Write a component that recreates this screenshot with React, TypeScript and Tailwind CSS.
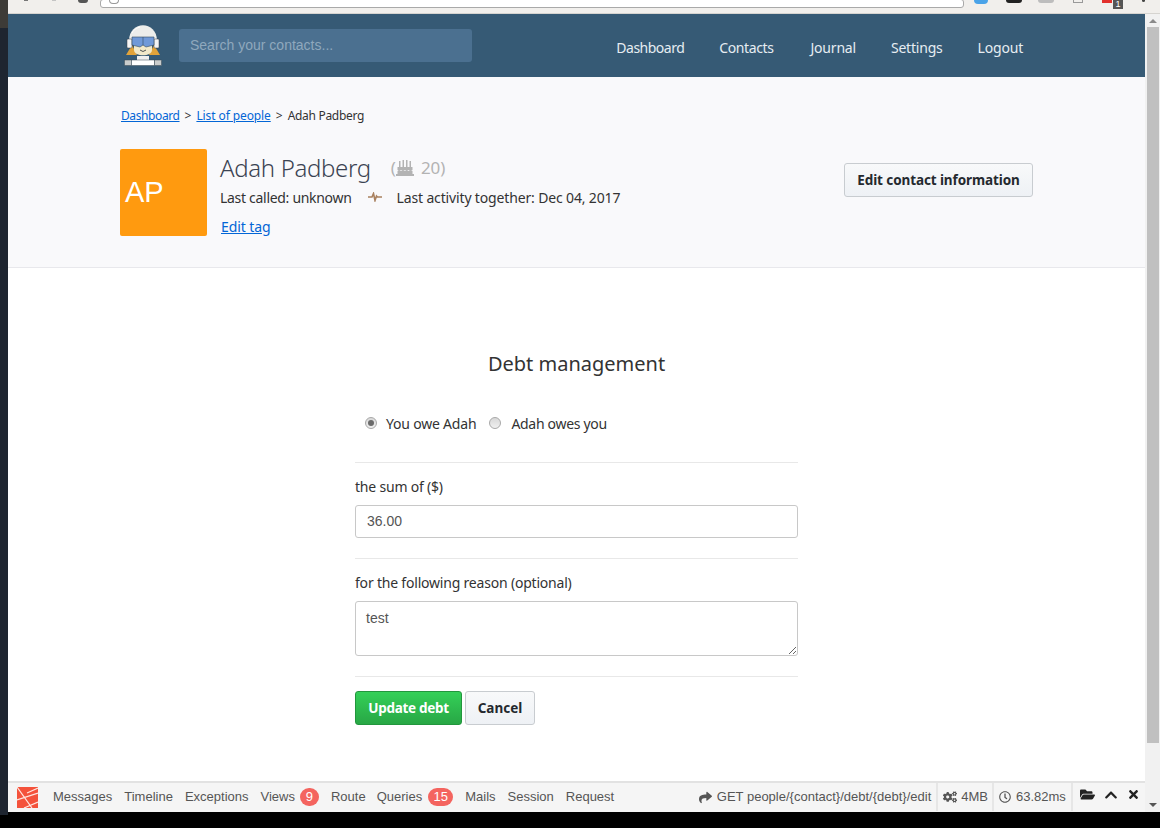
import { FaCogs, FaChevronUp, FaFolderOpen, FaRegClock, FaShare, FaTimes } from 'react-icons/fa';

const navLinks = [
  { label: 'Dashboard', className: 'tracking-[-0.5px]' },
  { label: 'Contacts', className: 'tracking-[-0.4px] mr-[2px]' },
  { label: 'Journal', className: '' },
  { label: 'Settings', className: '' },
  { label: 'Logout', className: '' },
];

function Logo() {
  return (
    <svg width="38" height="41" viewBox="0 0 38 41" className="shrink-0">
      <path d="M2 30 L8 20 L13 30 Z" fill="#e2a33a" />
      <path d="M36 30 L30 20 L25 30 Z" fill="#e2a33a" />
      <path d="M5 16 C5 -5 33 -5 33 16 L33 20 H5 Z" fill="#ecedeb" />
      <path d="M8 8 C10 4 13 3 16 2" fill="none" stroke="#ffffff" strokeWidth="1" />
      <path d="M10 20 H28 V25 C28 32 10 32 10 25 Z" fill="#f2e9c9" />
      <rect x="3" y="14" width="5" height="9" rx="1" fill="#f4f4f4" stroke="#3a3f44" strokeWidth="0.5" />
      <rect x="30" y="14" width="5" height="9" rx="1" fill="#f4f4f4" stroke="#3a3f44" strokeWidth="0.5" />
      <path d="M8 12 H30 V20 L22 22 L19 20 L16 22 L8 20 Z" fill="#7099d8" stroke="#34495e" strokeWidth="0.6" />
      <path d="M19 12 V20" stroke="#34495e" strokeWidth="0.6" />
      <path d="M16 25 Q19 28 22 25" fill="none" stroke="#3a3f44" strokeWidth="0.9" />
      <rect x="13" y="31" width="12" height="4" fill="#f0f0ee" />
      <rect x="0.5" y="35" width="7" height="5.5" fill="#c9cccc" stroke="#3a4a55" strokeWidth="0.5" />
      <rect x="7.5" y="35" width="23" height="5.5" fill="#ffffff" stroke="#3a4a55" strokeWidth="0.5" />
      <rect x="30.5" y="35" width="7" height="5.5" fill="#c9cccc" stroke="#3a4a55" strokeWidth="0.5" />
    </svg>
  );
}

function Cake() {
  return (
    <svg width="18" height="16" viewBox="0 0 18 16">
      <g fill="#b3b3b3">
        <rect x="3" y="1" width="1.5" height="6" />
        <rect x="6.5" y="0" width="1.5" height="7" />
        <rect x="10" y="0" width="1.5" height="7" />
        <rect x="13.5" y="1" width="1.5" height="6" />
        <path d="M1.5 7 H16.5 V10 Q14.5 12 12.5 10 Q10.5 12 9 10 Q7 12 5 10 Q3 12 1.5 10 Z" />
        <rect x="1.5" y="11" width="15" height="3" />
        <rect x="0" y="14" width="18" height="2" />
      </g>
    </svg>
  );
}

function Pulse() {
  return (
    <svg width="14" height="10" viewBox="0 0 14 10" className="block">
      <path d="M0 5 H4 L5.5 1.5 L7 8.5 L8.5 4 L9.5 5 H14" fill="none" stroke="#a9815f" strokeWidth="1.6" />
    </svg>
  );
}

function LaravelMark() {
  return (
    <svg width="21" height="21" viewBox="0 0 21 21" className="shrink-0">
      <rect width="21" height="21" fill="#f4523b" />
      <path d="M0 0 L15 21 M0 13 L21 6 M10 6 L21 1 M7 21 L21 15" fill="none" stroke="#ffe6e0" strokeWidth="1.2" />
    </svg>
  );
}

function Radio({ checked }: { checked?: boolean }) {
  return (
    <span className="w-3 h-3 rounded-full border border-[#a8a8a8] bg-gradient-to-b from-[#d8d8d8] to-[#f0f0f0] flex items-center justify-center shrink-0">
      {checked && <span className="w-[6px] h-[6px] rounded-full bg-[#6b6b6b]" />}
    </span>
  );
}

function DebugBar() {
  const tab = 'text-[13px] text-[#555]';
  return (
    <div className="h-[31px] shrink-0 pb-[1px] bg-[#f5f5f5] border-t-2 border-[#e2e2e2] flex items-center font-['Liberation_Sans',sans-serif] text-[13px] text-[#555]">
      <div className="pl-[9px] pr-[15px]">
        <LaravelMark />
      </div>
      <div className="flex items-center gap-3">
        <span className={tab}>Messages</span>
        <span className={tab}>Timeline</span>
        <span className={tab}>Exceptions</span>
        <span className={`${tab} flex items-center gap-[5px]`}>
          Views
          <span className="bg-[#f4645f] text-white rounded-full h-[18px] min-w-[19px] px-[5px] flex items-center justify-center text-[13px]">9</span>
        </span>
        <span className={`${tab} -mr-[1px]`}>Route</span>
        <span className={`${tab} flex items-center gap-[6px]`}>
          Queries
          <span className="bg-[#f4645f] text-white rounded-full h-[18px] min-w-[25px] px-[5px] flex items-center justify-center text-[13px]">15</span>
        </span>
        <span className={tab}>Mails</span>
        <span className={tab}>Session</span>
        <span className={tab}>Request</span>
      </div>
      <div className="ml-auto flex items-stretch h-full">
        <div className="flex items-center gap-[5px] pr-[5px] border-r-2 border-[#e6e6e6]">
          <FaShare className="text-[13px] text-[#555]" />
          GET people/&#123;contact&#125;/debt/&#123;debt&#125;/edit
        </div>
        <div className="flex items-center gap-[4px] pl-[5px] pr-[4px] border-r-2 border-[#e6e6e6]">
          <FaCogs className="text-[14px] text-[#555]" />
          4MB
        </div>
        <div className="flex items-center gap-[5px] px-[5px] w-[79px] border-r-2 border-[#e6e6e6]">
          <FaRegClock className="text-[12px] text-[#555]" />
          63.82ms
        </div>
        <div className="flex items-center gap-[9px] pl-[7px] pr-[5px] pb-[5px] text-[#222]">
          <FaFolderOpen className="text-[15px]" />
          <FaChevronUp className="text-[14px]" />
          <FaTimes className="text-[13px]" />
        </div>
      </div>
    </div>
  );
}

function BrowserChrome() {
  return (
    <div className="h-[14px] shrink-0 bg-[#f1efec] border-b border-[#d6d4d0] flex items-start overflow-hidden">
      <div className="w-[92px] flex items-start pl-[16px]">
        <span className="w-[4px] h-[1px] bg-[#777]" />
        <span className="ml-[24px] w-[4px] h-[1px] bg-[#c4c4c4]" />
        <span className="ml-[22px] w-[10px] h-[3px] rounded-b-full bg-[#555]" />
      </div>
      <div className="w-[864px] h-[9px] -mt-[1px] pl-[8px] bg-white border border-[#a9a9a9] rounded-[3px]">
        <span className="block w-[10px] h-[4px] rounded-b-full border border-t-0 border-[#999]" />
      </div>
      <div className="flex-1 flex items-start pl-[10px]">
        <span className="w-[14px] h-[4px] bg-[#4aa3e8] rounded-b-sm" />
        <span className="ml-[18px] w-[16px] h-[3px] bg-[#222] rounded-b-md" />
        <span className="ml-[16px] w-[16px] h-[3px] bg-[#bdbdbd] rounded-b-sm" />
        <span className="ml-[19px] w-[10px] h-[3px] border-x border-b border-[#999]" />
        <span className="ml-[19px] w-[10px] h-[3px] bg-[#e2302c]" />
        <span className="ml-[1px] w-[10px] h-[9px] bg-[#555] text-white text-[9px] leading-[9px] text-center font-['Liberation_Sans',sans-serif]">1</span>
        <span className="ml-[19px] w-[3px] h-[2px] bg-[#444] rounded-b-full" />
      </div>
    </div>
  );
}

function Scrollbar() {
  return (
    <div className="w-[15px] shrink-0 bg-[#f1f1f1] flex flex-col items-center">
      <span className="mt-[5px] w-0 h-0 border-x-[4px] border-x-transparent border-b-[4px] border-b-[#8a8a8a]" />
      <div className="mt-[4px] w-[12px] h-[716px] bg-[#c0c0c0]" />
      <span className="mt-auto mb-[5px] w-0 h-0 border-x-[4px] border-x-transparent border-t-[4px] border-t-[#555]" />
    </div>
  );
}

export default function App() {
  return (
    <div className="w-[1160px] h-[828px] overflow-hidden flex bg-black font-['Noto_Sans',sans-serif]">
      <div className="w-2 h-[815px] shrink-0 bg-[#1e2530] flex flex-col">
        <div className="h-[28px] bg-[#3d3b37]" />
      </div>
      <div className="flex-1 flex flex-col min-w-0">
        <BrowserChrome />
        <div className="h-[798px] flex">
          <div className="flex-1 min-w-0 flex flex-col bg-white">
            {/* Top nav */}
            <header className="h-[63px] shrink-0 bg-[#365a75]">
              <div className="mx-[112px] h-full flex items-center">
                <div className="ml-[4px] mr-[17px]">
                  <Logo />
                </div>
                <div className="w-[293px] h-[33px] rounded-[3px] bg-[#4b7090] px-[11px] flex items-center text-[14px] text-[#8fa8bd] font-['Liberation_Sans',sans-serif]">
                  Search your contacts...
                </div>
                <nav className="ml-auto flex items-center gap-[35px] pr-[10px] pt-[4px] text-[14px] tracking-[-0.2px] text-[#e6edf2]">
                  {navLinks.map((l) => (
                    <span key={l.label} className={l.className}>
                      {l.label}
                    </span>
                  ))}
                </nav>
              </div>
            </header>

            {/* Contact header */}
            <section className="h-[191px] shrink-0 bg-[#f9f9fb] border-b border-[#e8e8ec]">
              <div className="mx-[112px]">
                <div className="pt-[30px] pl-[1px] flex items-center gap-[5px] text-[12px] text-[#333] h-[48px]">
                  <a className="text-[#0366d6] underline tracking-[-0.4px]">Dashboard</a>
                  <span>&gt;</span>
                  <a className="text-[#0366d6] underline tracking-[-0.1px]">List of people</a>
                  <span>&gt;</span>
                  <span className="tracking-[-0.3px]">Adah Padberg</span>
                </div>
                <div className="mt-[24px] flex items-start">
                  <div className="w-[87px] h-[87px] rounded-[2px] bg-[#ff9a0f] flex items-center pl-[5px] text-white text-[29px] font-['Liberation_Sans',sans-serif]">
                    AP
                  </div>
                  <div className="ml-[13px] flex-1">
                    <div className="flex items-center h-[35px] mt-[1px]">
                      <h1 className="text-[24px] font-light tracking-[-0.35px] text-[#3b4352]">Adah Padberg</h1>
                      <span className="ml-[20px] flex items-center text-[17px] text-[#b3b3b3]">
                        (<Cake />
                        <span className="ml-[7px]">20)</span>
                      </span>
                    </div>
                    <div className="flex items-center h-[24px] text-[14px] text-[#333]">
                      <span className="tracking-[-0.3px]">Last called: unknown</span>
                      <span className="ml-[16px] mr-[15px]">
                        <Pulse />
                      </span>
                      <span className="tracking-[-0.15px]">Last activity together: Dec 04, 2017</span>
                    </div>
                    <a className="mt-[7px] ml-[1px] inline-block text-[14px] tracking-[-0.1px] text-[#0366d6] underline">Edit tag</a>
                  </div>
                  <button className="mt-[14px] w-[189px] h-[34px] rounded-[3px] border border-[#c8ccd0] bg-gradient-to-b from-[#f8f9fa] to-[#eef1f5] text-[13.5px] tracking-[-0.1px] font-bold text-[#24292e]">
                    Edit contact information
                  </button>
                </div>
              </div>
            </section>

            {/* Debt form */}
            <main className="flex-1 min-h-0">
              <div className="ml-[347px] w-[443px]">
                <h2 className="mt-[82px] h-[27px] flex items-center justify-center text-[20px] text-[#333]">Debt management</h2>
                <div className="mt-[34px] ml-[10px] h-[24px] flex items-center text-[14px] tracking-[-0.2px] text-[#333]">
                  <Radio checked />
                  <span className="ml-[9px]">You owe Adah</span>
                  <span className="ml-[13px]">
                    <Radio />
                  </span>
                  <span className="ml-[10px] tracking-[-0.3px]">Adah owes you</span>
                </div>
                <div className="mt-[27px] border-t border-[#e8e8e8]" />
                <label className="mt-[14px] block h-[20px] leading-[20px] text-[14px] tracking-[-0.2px] text-[#333]">the sum of ($)</label>
                <input
                  readOnly
                  value="36.00"
                  className="mt-[8px] block w-full h-[33px] px-[11px] pb-[2px] rounded-[3px] border border-[#c8c8c8] bg-white text-[14px] text-[#555] font-['Liberation_Sans',sans-serif]"
                />
                <div className="mt-[20px] border-t border-[#e8e8e8]" />
                <label className="mt-[14px] block h-[20px] leading-[20px] text-[14px] tracking-[-0.2px] text-[#333]">for the following reason (optional)</label>
                <textarea
                  readOnly
                  value="test"
                  className="mt-[8px] block w-full h-[55px] px-[10px] py-[6px] rounded-[3px] border border-[#c8c8c8] bg-white text-[14px] text-[#555] font-['Liberation_Sans',sans-serif]"
                />
                <div className="mt-[20px] border-t border-[#e8e8e8]" />
                <div className="mt-[14px] flex gap-[3px]">
                  <button className="w-[107px] h-[34px] rounded-[3px] border border-[#22963d] bg-gradient-to-b from-[#34d058] to-[#28a745] text-[13.5px] tracking-[-0.3px] font-bold text-white">
                    Update debt
                  </button>
                  <button className="w-[70px] h-[34px] rounded-[3px] border border-[#c8ccd0] bg-gradient-to-b from-[#f8f9fa] to-[#eef1f5] text-[13.5px] font-bold text-[#24292e]">
                    Cancel
                  </button>
                </div>
              </div>
            </main>

            <DebugBar />
          </div>
          <Scrollbar />
        </div>
      </div>
    </div>
  );
}
